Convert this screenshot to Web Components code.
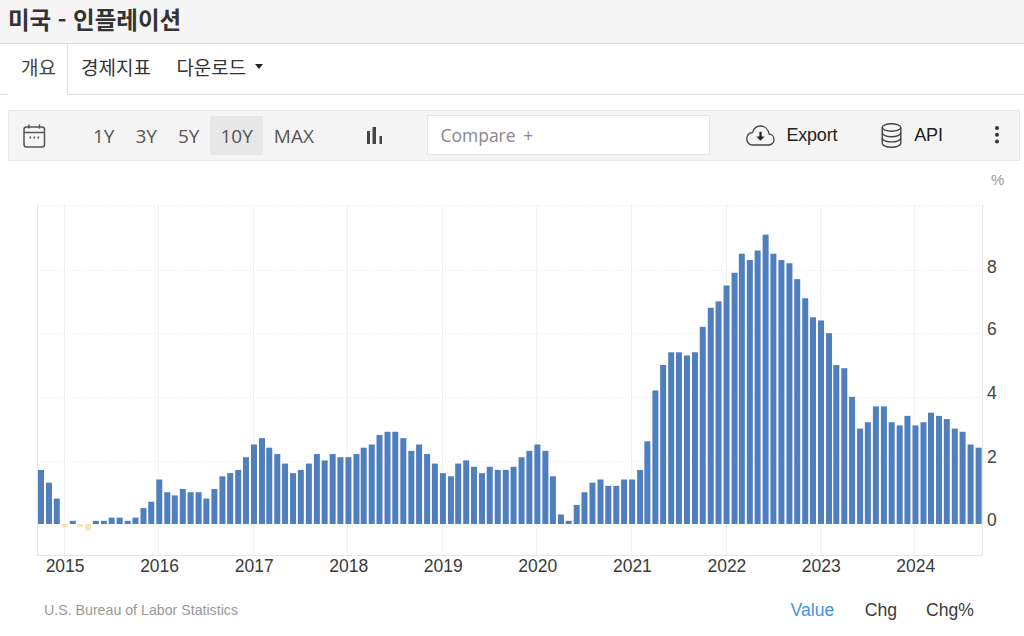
<!DOCTYPE html>
<html lang="ko">
<head>
<meta charset="utf-8">
<title>미국 - 인플레이션</title>
<style>
    html, body { margin: 0; background: #fff; }
    body { font-family: "Liberation Sans", "Noto Sans CJK KR", sans-serif; }
</style>
</head>
<body>
<page-title>미국 - 인플레이션</page-title>
<tab-nav>
    <tab-item active>개요</tab-item>
    <tab-item>경제지표</tab-item>
    <tab-item caret>다운로드</tab-item>
</tab-nav>
<chart-toolbar>
    <range-button>1Y</range-button>
    <range-button>3Y</range-button>
    <range-button>5Y</range-button>
    <range-button active>10Y</range-button>
    <range-button>MAX</range-button>
</chart-toolbar>
<inflation-chart></inflation-chart>
<chart-footer source="U.S. Bureau of Labor Statistics">
    <footer-toggle active>Value</footer-toggle>
    <footer-toggle>Chg</footer-toggle>
    <footer-toggle>Chg%</footer-toggle>
</chart-footer>

<script>
const KR_FONT = '"Noto Sans CJK KR", "Liberation Sans", sans-serif';

// 2014-10 .. 2024-09
const CPI = [
    1.7, 1.3, 0.8,
    -0.1, 0.1, -0.1, -0.2, 0.1, 0.1, 0.2, 0.2, 0.1, 0.2, 0.5, 0.7,
    1.4, 1.0, 0.9, 1.1, 1.0, 1.0, 0.8, 1.1, 1.5, 1.6, 1.7, 2.1,
    2.5, 2.7, 2.4, 2.2, 1.9, 1.6, 1.7, 1.9, 2.2, 2.0, 2.2, 2.1,
    2.1, 2.2, 2.4, 2.5, 2.8, 2.9, 2.9, 2.7, 2.3, 2.5, 2.2, 1.9,
    1.6, 1.5, 1.9, 2.0, 1.8, 1.6, 1.8, 1.7, 1.7, 1.8, 2.1, 2.3,
    2.5, 2.3, 1.5, 0.3, 0.1, 0.6, 1.0, 1.3, 1.4, 1.2, 1.2, 1.4,
    1.4, 1.7, 2.6, 4.2, 5.0, 5.4, 5.4, 5.3, 5.4, 6.2, 6.8, 7.0,
    7.5, 7.9, 8.5, 8.3, 8.6, 9.1, 8.5, 8.3, 8.2, 7.7, 7.1, 6.5,
    6.4, 6.0, 5.0, 4.9, 4.0, 3.0, 3.2, 3.7, 3.7, 3.2, 3.1, 3.4,
    3.1, 3.2, 3.5, 3.4, 3.3, 3.0, 2.9, 2.5, 2.4
];

class PageTitle extends HTMLElement {
    constructor() {
        super();
        this.attachShadow({ mode: 'open' });
        this.shadowRoot.innerHTML = `
      <style>
        :host {
          display: flex;
          align-items: center;
          box-sizing: border-box;
          height: 44px;
          padding: 0 8px 6px;
          background: #f5f5f5;
          border-bottom: 1px solid #dedede;
          font: bold 23.500px ${KR_FONT};
          color: #333;
        }
      </style>
      <slot></slot>
    `;
    }
}

class TabNav extends HTMLElement {
    constructor() {
        super();
        this.attachShadow({ mode: 'open' });
        this.shadowRoot.innerHTML = `
      <style>
        :host {
          display: flex;
          height: 50px;
          padding-left: 8px;
          border-bottom: 1px solid #dedede;
        }
      </style>
      <slot></slot>
    `;
    }
}

class TabItem extends HTMLElement {
    constructor() {
        super();
        this.attachShadow({ mode: 'open' });
        this.shadowRoot.innerHTML = `
      <style>
        :host {
          display: flex;
          align-items: center;
          height: 50px;
          padding: 0 12.5px 6px 13px;
          box-sizing: border-box;
          font: 19px ${KR_FONT};
          color: #333;
        }
        :host([active]) {
          height: 51px;
          padding-right: 11px;
          background: #fff;
          border-right: 1px solid #dedede;
          color: #444;
        }
        .caret { display: none; margin-left: 9px; width: 0; height: 0;
          border: 4.5px solid transparent; border-top: 5px solid #222; border-bottom: 0; }
        :host([caret]) .caret { display: block; }
      </style>
      <slot></slot><span class="caret"></span>
    `;
    }
}

class RangeButton extends HTMLElement {
    constructor() {
        super();
        this.attachShadow({ mode: 'open' });
        this.shadowRoot.innerHTML = `
      <style>
        :host {
          display: flex;
          align-items: center;
          height: 39px;
          padding: 0 10.5px;
          font: 19px "Open Sans", sans-serif;
          color: #555;
        }
        :host([active]) { background: #e8e8e8; }
      </style>
      <slot></slot>
    `;
    }
}

class ChartToolbar extends HTMLElement {
    constructor() {
        super();
        this.attachShadow({ mode: 'open' });
        this.shadowRoot.innerHTML = `
      <style>
        :host {
          display: flex;
          align-items: center;
          height: 49px;
          margin: 15px 4px 0 8px;
          background: #f5f5f5;
          border: 1px solid #e8e8e8;
          color: #222;
        }
        svg { display: block; flex: none; }
        .calendar { margin-left: 14px; margin-right: 36.500px; }
        .ranges { display: flex; }
        .bars { margin-left: 41px; margin-right: 44px; }
        .compare {
          box-sizing: border-box;
          display: flex;
          align-items: center;
          width: 283px;
          height: 40px;
          margin-top: -1px;
          padding-left: 12px;
          background: #fff;
          border: 1px solid #e6e6e6;
          font: 17.500px "Open Sans", sans-serif;
          word-spacing: 3px;
          color: #888;
        }
        .cloud { margin-left: 36px; margin-right: 11px; }
        .db { margin-left: 44px; margin-right: 12px; }
        .action { font-size: 18px; letter-spacing: -0.2px; margin-top: -1px; }
        .kebab { margin-left: 51px; margin-top: -2px; }
      </style>
      <svg class="calendar" width="23" height="24" viewBox="0 0 23 24" fill="none" stroke="#555" stroke-width="1.5">
        <rect x="1" y="3" width="20.5" height="20" rx="2.5"/>
        <path d="M1 8.5h20.5M6 .5v4M16.500 .5v4"/>
        <path d="M6.500 13.500h1.600M10.500 13.500h1.600M14.500 13.500h1.600" stroke-width="1.800"/>
      </svg>
      <div class="ranges"><slot></slot></div>
      <svg class="bars" width="18" height="18" viewBox="0 0 18 18" fill="#444">
        <rect x="2" y="4" width="3" height="13"/>
        <rect x="7.500" y="0" width="3.500" height="17"/>
        <rect x="14.500" y="9" width="2.500" height="8"/>
      </svg>
      <div class="compare">Compare +</div>
      <svg class="cloud" width="29" height="21" viewBox="0 0 29 21" fill="none" stroke="#444" stroke-width="1.300">
        <path d="M6.500 20h16.500a5.300 5.300 0 0 0 5-5.500 5.300 5.300 0 0 0-4.800-5.300C22.200 4 18.500 1 14.500 1 10.800 1 7.800 3.300 6.600 7.400 3 8 .8 10.800.8 14c0 3.300 2.500 6 5.700 6z"/>
        <path d="M14.500 6.800v5.500" stroke="#222" stroke-width="2.200"/>
        <path d="M10.400 11.400h8.200l-4.100 4.300z" fill="#222" stroke="none"/>
      </svg>
      <span class="action">Export</span>
      <svg class="db" width="21" height="25" viewBox="0 0 21 25" fill="none" stroke="#444" stroke-width="1.400">
        <ellipse cx="10.500" cy="4.500" rx="9.300" ry="3.700"/>
        <path d="M1.200 4.500v15.800c0 2.200 4.100 3.900 9.300 3.900s9.300-1.700 9.300-3.900V4.500"/>
        <path d="M1.200 9.800c0 2.200 4.100 3.900 9.300 3.900s9.300-1.700 9.300-3.900M1.200 15c0 2.200 4.100 3.900 9.300 3.900s9.300-1.700 9.300-3.900"/>
      </svg>
      <span class="action">API</span>
      <svg class="kebab" width="6" height="20" viewBox="0 0 6 20" fill="#333">
        <circle cx="3" cy="3" r="2"/><circle cx="3" cy="9.800" r="2"/><circle cx="3" cy="16.500" r="2"/>
      </svg>
    `;
    }
}

class InflationChart extends HTMLElement {
    constructor() {
        super();
        this.attachShadow({ mode: 'open' });
    }

    connectedCallback() {
        if (this._initialized) return;
        this._initialized = true;
        this.render();
    }

    // x of a month on the page, the axis is date based
    xOf(year, month) {
        const days = (Date.UTC(year, month, 1) - Date.UTC(2015, 0, 1)) / 86400000;
        return 64.8 + days * 0.2588;
    }

    render() {
        const zero = 524;
        const unit = 31.8;
        const years = [2015, 2016, 2017, 2018, 2019, 2020, 2021, 2022, 2023, 2024];

        const bars = CPI.map((v, i) => {
            const cx = this.xOf(2014, 9 + i);
            const h = Math.abs(v) * unit;
            const y = v < 0 ? zero : zero - h;
            const fill = v < 0 ? '#f5e3b5' : '#4f80bd';
            return `<rect x="${(cx - 3).toFixed(2)}" y="${y.toFixed(2)}" width="6" height="${h.toFixed(2)}" fill="${fill}"/>`;
        }).join('');

        const vLines = years.map((yr) => {
            const x = Math.round(this.xOf(yr, 0)) - 0.5;
            return `<path d="M${x} 205V555" stroke="#f1f1f1"/>`;
        }).join('');

        const hLines = [205, 270, 333, 397, 461].map(
            (y) => `<path d="M37 ${y}.5H982" stroke="#e8e8e8" stroke-dasharray="1 2"/>`
        ).join('');

        const yLabels = [[8, 273], [6, 335], [4, 399], [2, 463], [0, 526]].map(
            ([t, y]) => `<text x="987" y="${y}" class="val">${t}</text>`
        ).join('');

        const xLabels = years.map((yr) => {
            const x = this.xOf(yr, 0) + 0.3;
            return `<text x="${x.toFixed(1)}" y="572" text-anchor="middle" class="yr">${yr}</text>`;
        }).join('');

        this.shadowRoot.innerHTML = `
      <style>
        :host { display: block; height: 429px; }
        svg { display: block; }
        text { font-family: "Liberation Sans", sans-serif; }
        .val { font-size: 17.500px; fill: #444; }
        .yr { font-size: 17.500px; fill: #3a3a3a; }
        .unit { font-size: 15px; fill: #999; }
      </style>
      <svg width="1024" height="429" viewBox="0 161 1024 429">
        <text x="991" y="185" class="unit">%</text>
        ${vLines}
        ${hLines}
        <path d="M37.500 205V555.500H982.500V205" fill="none" stroke="#e6e6e6"/>
        ${bars}
        ${yLabels}
        ${xLabels}
      </svg>
    `;
    }
}

class ChartFooter extends HTMLElement {
    constructor() {
        super();
        this.attachShadow({ mode: 'open' });
        this.shadowRoot.innerHTML = `
      <style>
        :host {
          display: flex;
          justify-content: space-between;
          align-items: center;
          height: 40px;
          padding: 0 50px 0 44px;
        }
        .source { font-size: 14.200px; color: #999; }
        .toggles { display: flex; gap: 29px; }
      </style>
      <span class="source"></span>
      <div class="toggles"><slot></slot></div>
    `;
        this.shadowRoot.querySelector('.source').textContent = this.getAttribute('source');
    }
}

class FooterToggle extends HTMLElement {
    constructor() {
        super();
        this.attachShadow({ mode: 'open' });
        this.shadowRoot.innerHTML = `
      <style>
        :host { display: block; font-size: 17.600px; color: #3c3c3c; }
        :host([active]) { color: #3f97dc; margin-right: 1.500px; }
      </style>
      <slot></slot>
    `;
    }
}

customElements.define('page-title', PageTitle);
customElements.define('tab-nav', TabNav);
customElements.define('tab-item', TabItem);
customElements.define('range-button', RangeButton);
customElements.define('chart-toolbar', ChartToolbar);
customElements.define('inflation-chart', InflationChart);
customElements.define('chart-footer', ChartFooter);
customElements.define('footer-toggle', FooterToggle);
</script>
</body>
</html>
